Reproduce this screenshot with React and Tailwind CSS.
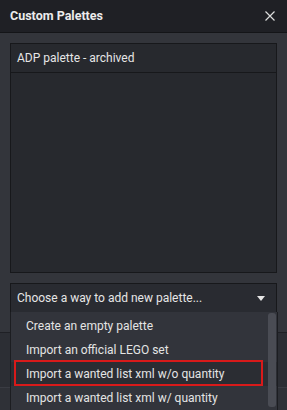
import React from 'react';

const items = [
    'Create an empty palette',
    'Import an official LEGO set',
    'Import a wanted list xml w/o quantity',
    'Import a wanted list xml w/ quantity',
];

export default function App() {
    return (
        <div
            className="w-[287px] h-[410px] flex flex-col bg-[#33353b] text-[#e3e3e3] relative overflow-hidden"
            style={{ fontFamily: 'Roboto, "Liberation Sans", sans-serif' }}
        >
            {/* Title bar */}
            <div className="h-[33px] shrink-0 flex items-center justify-between pl-[10px] pr-[12px] bg-[#1f2025] border-b border-[#141518]">
                <span className="text-[12.5px] font-bold text-[#ececec]">Custom Palettes</span>
                <svg className="w-[10px] h-[10px]" viewBox="0 0 10 10" fill="none" stroke="#dcdcdc" strokeWidth="1.2">
                    <path d="M0.5 0.5l9 9M9.5 0.5l-9 9" />
                </svg>
            </div>

            {/* Content */}
            <div className="flex flex-col px-[10px] pt-[10px] shrink-0">
                <div className="h-[230px] flex flex-col bg-[#27292e] border border-[#17181b]">
                    <div className="h-[29px] shrink-0 flex items-center px-[6px] border-b border-[#17181b] text-[12px] text-[#e6e6e6]">
                        ADP palette - archived
                    </div>
                </div>
                <div className="mt-[10px] h-[30px] flex items-center justify-between pl-[6px] pr-[11px] bg-[#292b31] border border-[#17181b] text-[12px] text-[#e6e6e6]">
                    <span>Choose a way to add new palette...</span>
                    <svg className="w-[8px] h-[5px]" viewBox="0 0 8 5">
                        <path d="M0 0h8L4 5z" fill="#e6e6e6" />
                    </svg>
                </div>
            </div>

            {/* Background strip behind the dropdown */}
            <div className="mt-[19px] flex-1 flex flex-col border-t border-[#1f2025] bg-[#2a2c32]">
                <div className="h-[54px] bg-[#2c2e34]"></div>
                <div className="flex-1 border-t border-[#3a3c43] bg-[#2f3137]"></div>
            </div>

            {/* Dropdown list */}
            <div className="absolute left-[10px] top-[312px] w-[268px] h-[98px] bg-[#32343b] border-l border-r border-[#1c1d21] pt-[2px]">
                <div className="flex flex-col">
                    {items.map((label, i) => (
                        <div
                            key={label}
                            className={`h-[24px] flex items-center pl-[15px] text-[12px] text-[#e4e4e4] ${i === 2 ? 'bg-[#2b2d33]' : ''}`}
                        >
                            {label}
                        </div>
                    ))}
                </div>
                <div className="absolute right-[1px] top-[1px] w-[8px] h-[94px] rounded-[3px] bg-[#4a4c54]"></div>
                <div className="absolute left-[3px] top-[48px] w-[249px] h-[26px] border-2 border-[#d81a1a]"></div>
            </div>
        </div>
    );
}
